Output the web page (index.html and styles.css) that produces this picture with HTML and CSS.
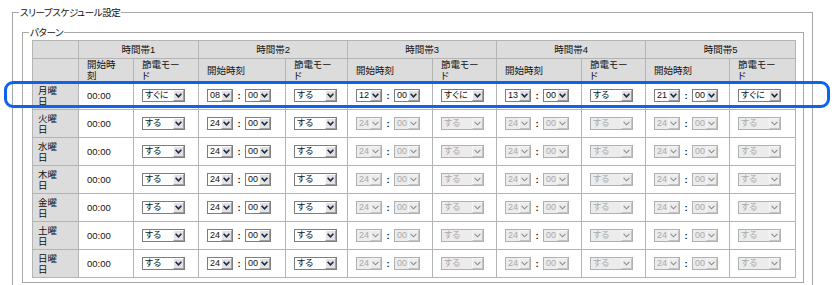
FILE: index.html
```html
<!DOCTYPE html>
<html lang="ja">
<head>
  <meta charset="UTF-8" />
  <meta name="viewport" content="width=device-width, initial-scale=1.0" />
  <title>スリープスケジュール設定</title>
  <link rel="stylesheet" href="styles.css">
</head>
<body>
  <div class="focus-ring"></div>
  <fieldset class="group">
    <legend>スリープスケジュール設定</legend>
    <fieldset class="group inner">
      <legend>パターン</legend>
      <table class="schedule">
        <colgroup>
          <col style="width:46px"><col style="width:55px"><col style="width:65px">
          <col style="width:87px"><col style="width:62px"><col style="width:85px">
          <col style="width:64px"><col style="width:85px"><col style="width:64px">
          <col style="width:84px"><col style="width:66px">
        </colgroup>
        <thead>
          <tr>
            <th class="corner"></th>
            <th colspan="2">時間帯1</th>
            <th colspan="2">時間帯2</th>
            <th colspan="2">時間帯3</th>
            <th colspan="2">時間帯4</th>
            <th colspan="2">時間帯5</th>
          </tr>
          <tr>
            <th class="corner"></th>
            <th><span class="narrow">開始時刻</span></th><th><span class="wrap">節電モード</span></th>
            <th>開始時刻</th><th><span class="wrap">節電モード</span></th>
            <th>開始時刻</th><th><span class="wrap">節電モード</span></th>
            <th>開始時刻</th><th><span class="wrap">節電モード</span></th>
            <th>開始時刻</th><th><span class="wrap">節電モード</span></th>
          </tr>
        </thead>
        <tbody id="scheduleBody"></tbody>
      </table>
    </fieldset>
    <fieldset class="group inner next">
      <legend>パターン割り当て</legend>
    </fieldset>
  </fieldset>

  <script>
    // Build the weekly rows
    const days = ['月曜日', '火曜日', '水曜日', '木曜日', '金曜日', '土曜日', '日曜日'];
    const modes = ['する', 'すぐに', 'しない'];
    const arrow = '<span class="arrow"><svg viewBox="0 0 9 9"><path d="M1.6 2.8 4.5 5.8 7.4 2.8"/></svg></span>';

    function pick(list, value, cls, off) {
      const opts = list.map(v => `<option${v === value ? ' selected' : ''}>${v}</option>`).join('');
      return `<span class="sel ${cls}${off ? ' off' : ''}"><select${off ? ' disabled' : ''}>${opts}</select>${arrow}</span>`;
    }
    const hours = Array.from({ length: 25 }, (_, i) => String(i).padStart(2, '0'));
    const mins = ['00', '10', '20', '30', '40', '50'];

    function slot(h, mode, off) {
      return `<td>${pick(hours, h, 'sel-time', off)}<span class="colon">:</span>${pick(mins, '00', 'sel-time', off)}</td>` +
             `<td>${pick(modes, mode, 'sel-mode', off)}</td>`;
    }

    const rows = days.map((day, i) => {
      const first = i === 0;
      return `<tr><th class="day"><span class="wrap-day">${day}</span></th>` +
        `<td>00:00</td><td>${pick(modes, first ? 'すぐに' : 'する', 'sel-mode', false)}</td>` +
        slot(first ? '08' : '24', 'する', false) +
        slot(first ? '12' : '24', first ? 'すぐに' : 'する', !first) +
        slot(first ? '13' : '24', 'する', !first) +
        slot(first ? '21' : '24', first ? 'すぐに' : 'する', !first) +
        '</tr>';
    });
    document.getElementById('scheduleBody').innerHTML = rows.join('');
  </script>
</body>
</html>
```

FILE: styles.css
```css
html { overflow: hidden; }
body { margin: 0; padding: 7px 21px 0 12px; font-family: "Liberation Sans", "Noto Sans CJK JP", sans-serif; font-size: 9.5px; line-height: 11px; font-feature-settings: "palt"; color: #111; background: #fff; position: relative; }
.group { border: 1px solid #a8a8a8; margin: 0; padding: 9px 8px 4px 9px; min-width: 0; }
.group legend { padding: 0 1px; margin-left: -3px; letter-spacing: -0.4px; }
.group.inner { padding: 2px 7px 4px 9px; }
.group.next { margin-top: 5px; border-bottom: 0; }

.schedule { border-collapse: collapse; table-layout: fixed; width: 763px; }
.schedule th, .schedule td { border: 1px solid #b4b4b4; padding: 0 0 0 8px; text-align: left; font-weight: normal; vertical-align: middle; white-space: nowrap; }
.schedule thead th { background: #dcdcdc; white-space: normal; }
.schedule thead tr:first-child th { text-align: center; height: 17px; padding: 0; }
.schedule thead tr:nth-child(2) th { height: 21px; }
.schedule tbody td, .schedule tbody th { height: 27px; }
.schedule th.day { background: #dcdcdc; padding-left: 5px; white-space: normal; }
.wrap { display: inline-block; width: 39px; }
.narrow { display: inline-block; width: 30px; }
.wrap-day { display: inline-block; width: 20px; }

/* select boxes */
.sel { display: inline-flex; box-sizing: border-box; height: 13px; border: 1px solid #7d7d7d; background: #fff; vertical-align: middle; }
.sel select { -webkit-appearance: none; appearance: none; border: 0; margin: 0; padding: 0 0 0 2px; background: transparent; font: inherit; font-size: 9px; font-feature-settings: "palt"; line-height: 11px; height: 11px; color: #111; flex: 1; min-width: 0; outline: none; }
.sel .arrow { width: 11px; box-sizing: border-box; border: 1px solid #fff; border-right-color: #a0a0a0; border-bottom-color: #a0a0a0; background: #e2e2e2; display: flex; align-items: center; justify-content: center; }
.sel svg { width: 9px; height: 9px; fill: none; stroke: #1a2748; stroke-width: 1.6; }
.sel-mode { width: 43px; }
.sel-time { width: 26px; }
.sel.off { border-color: #b0b0b0; background: #ececec; }
.sel.off select { color: #8e8e8e; }
.sel.off .arrow { background: #ececec; border-color: #f6f6f6 #c4c4c4 #c4c4c4 #f6f6f6; }
.sel.off svg { stroke: #8c8c8c; stroke-width: 1.1; }
.colon { display: inline-block; width: 12px; text-align: center; font-weight: bold; vertical-align: middle; }

.focus-ring { position: absolute; left: 4px; top: 81px; width: 820px; height: 21px; border: 3px solid #0c63f2; border-radius: 9px; pointer-events: none; }
```
